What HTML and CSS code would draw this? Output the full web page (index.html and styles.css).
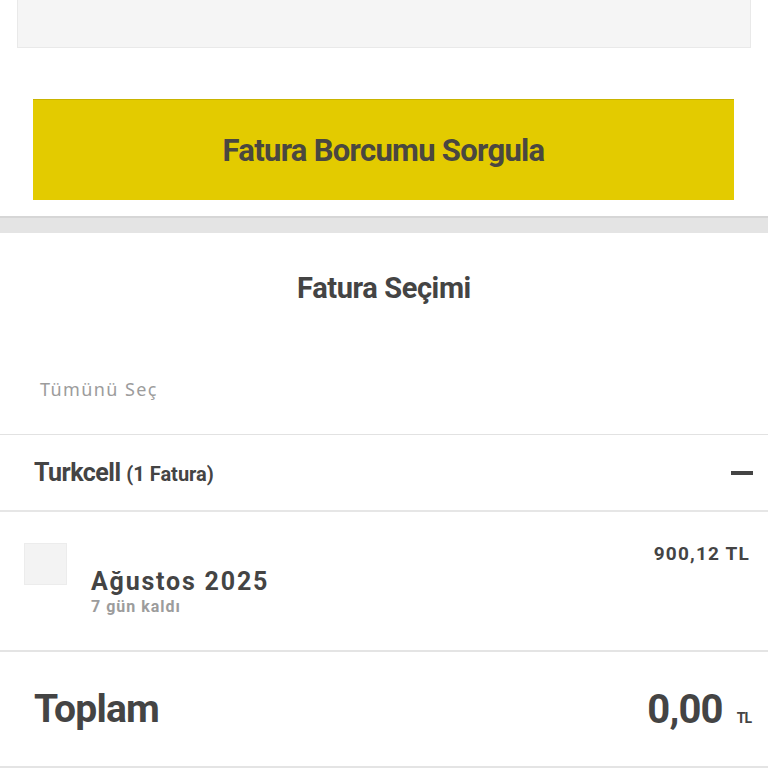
FILE: index.html
```html
<!DOCTYPE html>
<html lang="tr">
<head>
<meta charset="utf-8">
<link rel="stylesheet" href="styles.css">
</head>
<body>
<div class="top-box"></div>
<div class="btn-wrap">
  <button class="query-btn">Fatura Borcumu Sorgula</button>
</div>
<div class="band"></div>
<h2 class="title">Fatura Seçimi</h2>
<div class="select-all">Tümünü Seç</div>
<div class="group">
  <div class="group-name">Turkcell <span class="count">(1 Fatura)</span></div>
  <span class="minus"></span>
</div>
<div class="item">
  <span class="checkbox"></span>
  <div class="item-info">
    <div class="item-title">Ağustos 2025</div>
    <div class="item-sub">7 gün kaldı</div>
  </div>
  <div class="item-amount">900,12 TL</div>
</div>
<div class="total">
  <div class="total-label">Toplam</div>
  <div class="total-value"><span class="num">0,00</span><span class="cur">TL</span></div>
</div>
</body>
</html>
```
FILE: styles.css
```css
html, body {
  margin: 0;
  padding: 0;
  background: #ffffff;
  font-family: Roboto, "Liberation Sans", sans-serif;
  color: #444444;
}
.top-box {
  margin: 0 17px;
  height: 47px;
  background: #f5f5f5;
  border: 1px solid #e9e9e9;
  border-top: none;
}
.btn-wrap {
  padding: 51px 34px 16px 33px;
}
.query-btn {
  display: block;
  width: 100%;
  height: 101px;
  border: none;
  border-top: 1px solid #c9b400;
  background: #e3cb00;
  color: #4a4740;
  font-family: Roboto, "Liberation Sans", sans-serif;
  font-weight: 700;
  font-size: 31px;
  letter-spacing: -0.7px;
  padding: 0;
}
.band {
  height: 15px;
  background: #e4e4e4;
  border-top: 2px solid #d6d6d6;
}
.title {
  margin: 0;
  height: 110px;
  display: flex;
  align-items: center;
  justify-content: center;
  font-size: 29px;
  font-weight: 700;
  letter-spacing: -0.4px;
  line-height: 1;
  color: #444444;
}
.select-all {
  height: 92px;
  box-sizing: border-box;
  padding: 34px 0 0 40px;
  font-family: "Noto Sans", sans-serif;
  font-size: 18px;
  font-weight: 400;
  letter-spacing: 1.4px;
  color: #9c9c9c;
  border-bottom: 1px solid #e2e2e2;
}
.group {
  height: 77px;
  box-sizing: border-box;
  display: flex;
  align-items: center;
  justify-content: space-between;
  padding: 0 15px 0 34px;
  border-bottom: 2px solid #e6e6e6;
}
.group-name {
  font-size: 25px;
  font-weight: 700;
  letter-spacing: -0.5px;
  color: #444444;
}
.count {
  font-size: 20px;
  letter-spacing: 0;
}
.minus {
  width: 22px;
  height: 4px;
  background: #444444;
}
.item {
  height: 140px;
  box-sizing: border-box;
  display: flex;
  align-items: flex-start;
  padding: 31px 18px 0 24px;
  border-bottom: 2px solid #e4e4e4;
}
.checkbox {
  width: 43px;
  height: 42px;
  box-sizing: border-box;
  background: #f3f3f3;
  border: 1px solid #ececec;
  flex: none;
}
.item-info {
  margin-left: 24px;
  padding-top: 24px;
  flex: 1;
}
.item-title {
  font-size: 25px;
  font-weight: 700;
  letter-spacing: 1.8px;
  line-height: 30px;
  color: #444444;
}
.item-sub {
  font-size: 16px;
  font-weight: 700;
  letter-spacing: 1px;
  line-height: 20px;
  color: #9c9c9c;
}
.item-amount {
  font-size: 19px;
  font-weight: 700;
  letter-spacing: 1.2px;
  line-height: 22px;
  margin-top: 0;
  color: #444444;
}
.total {
  height: 116px;
  box-sizing: border-box;
  display: flex;
  align-items: center;
  justify-content: space-between;
  padding: 0 17px 0 34px;
  border-bottom: 2px solid #e4e4e4;
}
.total-label {
  font-size: 39px;
  font-weight: 700;
  letter-spacing: -0.8px;
  color: #444444;
}
.total-value {
  display: flex;
  align-items: baseline;
}
.num {
  font-size: 40px;
  font-weight: 700;
  letter-spacing: -0.8px;
  color: #444444;
}
.cur {
  font-size: 14px;
  font-weight: 700;
  margin-left: 14px;
  letter-spacing: -1px;
  color: #444444;
}
```
